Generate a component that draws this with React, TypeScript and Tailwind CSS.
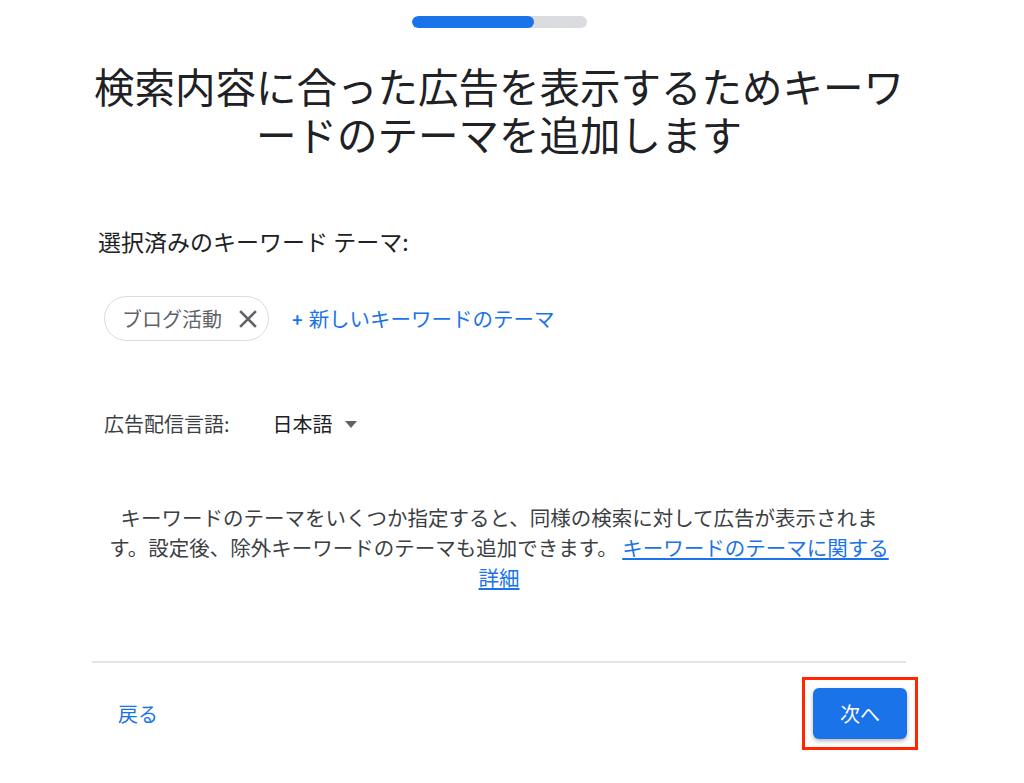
import React from 'react';

const font = { fontFamily: '"Noto Sans CJK JP", "Noto Sans", sans-serif' };

function CloseIcon() {
  return (
    <svg width="18" height="18" viewBox="0 0 18 18" className="shrink-0">
      <path d="M2 2 L16 16 M16 2 L2 16" stroke="#5f6368" strokeWidth="2.5" strokeLinecap="square" />
    </svg>
  );
}

function Caret() {
  return (
    <svg width="12" height="7" viewBox="0 0 12 7">
      <polygon points="0,0 12,0 6,7" fill="#5f6368" />
    </svg>
  );
}

export default function App() {
  return (
    <div className="min-h-screen bg-white" style={font}>
      <div className="ml-[92px] w-[814px] pt-[16px]">
        {/* Progress */}
        <div className="mx-auto flex h-[12px] w-[175px] overflow-hidden rounded-full bg-[#dadce0]">
          <div className="h-full w-[122px] rounded-full bg-[#1a73e8]" />
        </div>

        <h1 className="mt-[34px] text-center text-[40.5px] leading-[48px] font-normal text-[#202124]">
          検索内容に合った広告を表示するためキーワードのテーマを追加します
        </h1>

        <div className="mt-[67px] pl-[6px] text-[23px] leading-[32px] text-[#202124]">
          選択済みのキーワード テーマ:
        </div>

        <div className="mt-[39px] flex items-center pl-[12px]">
          <div className="flex h-[45px] items-center gap-[17px] rounded-full border border-[#dadce0] pr-[11px] pl-[17px]">
            <span className="text-[20px] leading-none whitespace-nowrap text-[#5f6368]">ブログ活動</span>
            <CloseIcon />
          </div>
          <button className="ml-[23px] flex items-center text-[20.5px] leading-none whitespace-nowrap text-[#1a73e8]">
            <span className="mr-[6px] text-[18px] font-bold">+</span>
            新しいキーワードのテーマ
          </button>
        </div>

        <div className="mt-[67px] flex h-[32px] items-center pl-[12px] text-[20px]">
          <span className="text-[#3c4043]">広告配信言語:</span>
          <span className="ml-[43px] text-[#202124]">日本語</span>
          <span className="ml-[12px] flex items-center">
            <Caret />
          </span>
        </div>

        <p className="mx-auto mt-[62px] w-[792px] text-center text-[20.5px] leading-[30px] text-[#3c4043]">
          キーワードのテーマをいくつか指定すると、同様の検索に対して広告が表示されます。設定後、除外キーワードのテーマも追加できます。{' '}
          <a className="text-[#1a73e8] underline underline-offset-[2px]">キーワードのテーマに関する詳細</a>
        </p>

        <div className="mt-[69px] h-[2px] bg-[#e3e4e6]" />

        <div className="mt-[25px] flex items-center justify-between">
          <button className="ml-[26px] text-[20px] text-[#1a73e8]">戻る</button>
          {/* highlight frame around the next button */}
          <div className="-my-[11px] -mr-[12px] border-[3.5px] border-[#ff2600] p-[8px]">
            <button className="block h-[51px] w-[94px] rounded-[6px] bg-[#1a73e8] text-[20px] text-white shadow-[0_2px_4px_rgba(0,0,0,0.3)]">
              次へ
            </button>
          </div>
        </div>
      </div>
    </div>
  );
}
